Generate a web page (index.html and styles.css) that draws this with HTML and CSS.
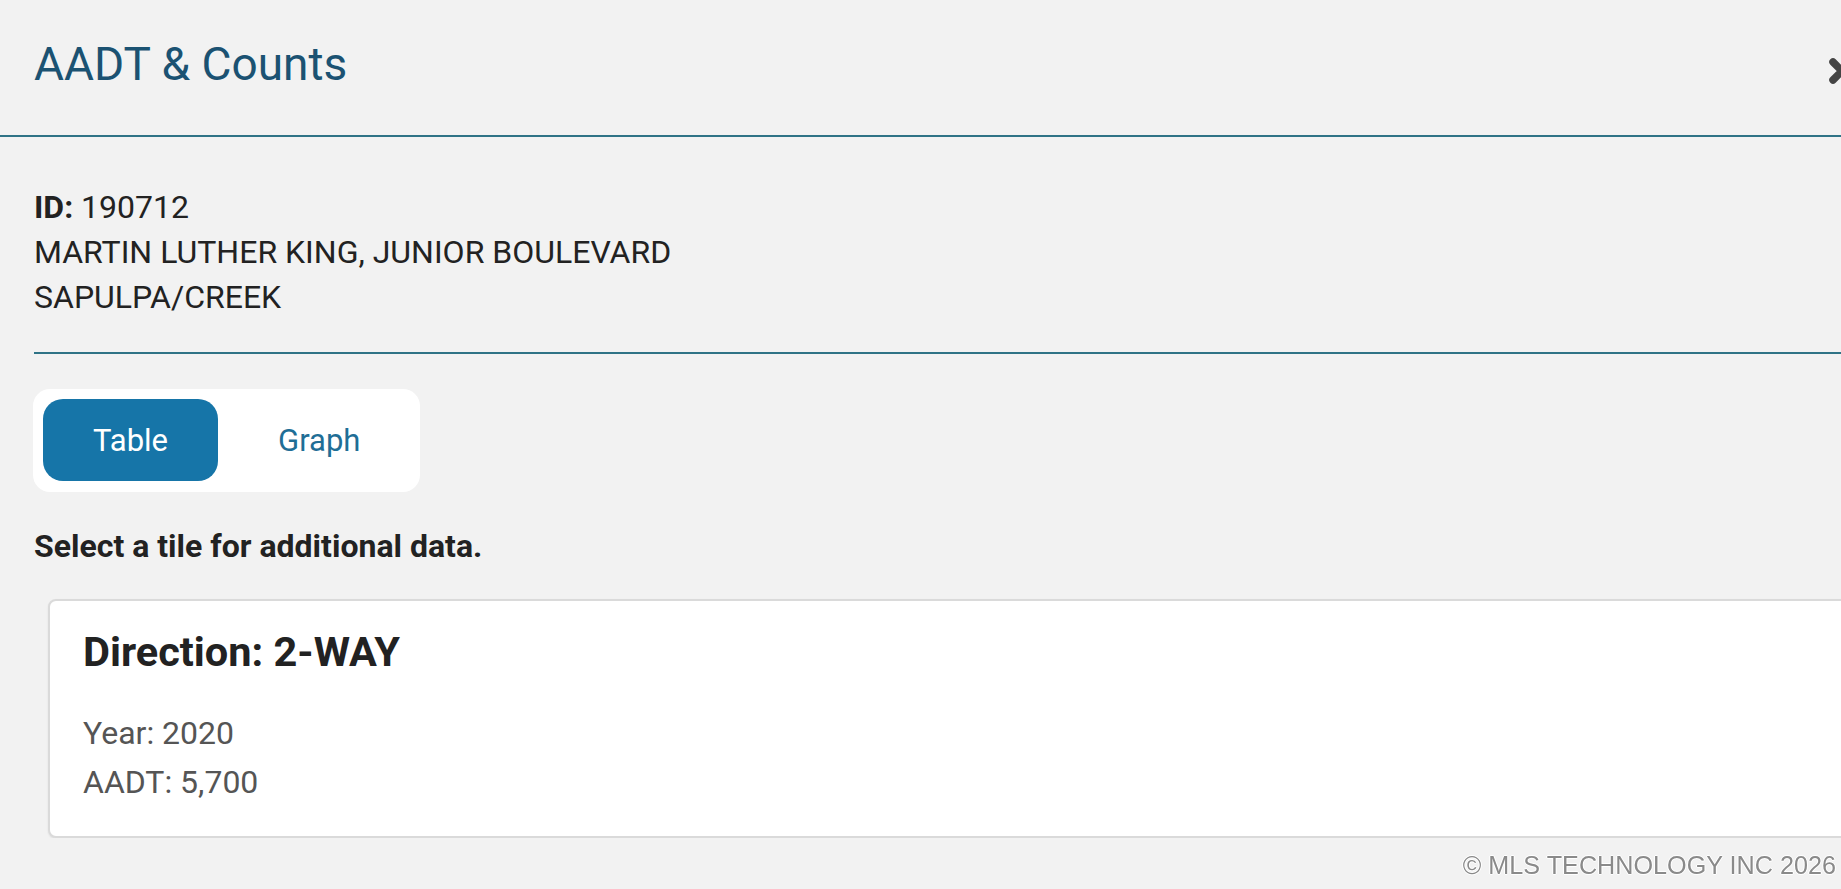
FILE: index.html
```html
<!DOCTYPE html>
<html lang="en">
<head>
<meta charset="utf-8">
<title>AADT &amp; Counts</title>
<link rel="stylesheet" href="styles.css">
</head>
<body>
<div class="modal">
  <header class="modal-header">
    <h1 class="modal-title">AADT &amp; Counts</h1>
    <button class="close-btn" aria-label="Close">
      <svg width="28" height="28" viewBox="0 0 28 28"><path d="M5 5 L23 23 M23 5 L5 23" stroke="#444" stroke-width="7.5" stroke-linecap="round" fill="none"/></svg>
    </button>
  </header>
  <section class="info">
    <div class="info-line"><b>ID:</b> 190712</div>
    <div class="info-line">MARTIN LUTHER KING, JUNIOR BOULEVARD</div>
    <div class="info-line">SAPULPA/CREEK</div>
  </section>
  <section class="content">
    <div class="toggle">
      <button class="toggle-btn active">Table</button>
      <button class="toggle-btn">Graph</button>
    </div>
    <p class="hint">Select a tile for additional data.</p>
    <div class="tile">
      <h2 class="tile-title">Direction: 2-WAY</h2>
      <div class="tile-line">Year: 2020</div>
      <div class="tile-line">AADT: 5,700</div>
    </div>
  </section>
</div>
<footer class="copyright">© MLS TECHNOLOGY INC 2026</footer>
</body>
</html>
```
FILE: styles.css
```css
html, body {
  margin: 0;
  padding: 0;
  overflow: hidden;
  background: #f2f2f2;
  font-family: Roboto, "Noto Sans", sans-serif;
  color: #222;
}

.modal {
  width: 1890px;
}

.modal-header {
  display: flex;
  justify-content: space-between;
  align-items: flex-start;
  padding: 37px 34px 43px 34px;
  border-bottom: 2px solid #2f7386;
}

.modal-title {
  margin: 0;
  font-size: 46px;
  font-weight: 400;
  line-height: 55px;
  color: #1b5272;
}

.close-btn {
  margin-top: 20px;
  padding: 0;
  border: 0;
  background: none;
  width: 28px;
  height: 28px;
  display: block;
}
.close-btn svg { display: block; }

.info {
  margin: 0 34px;
  padding: 48px 0 32px;
  border-bottom: 2px solid #2f7386;
}

.info-line {
  font-size: 32px;
  line-height: 45px;
}
.info-line b { font-weight: 700; }

.content {
  padding: 35px 34px 0 33px;
}

.toggle {
  display: inline-flex;
  gap: 10px;
  padding: 10px 10px 11px;
  background: #fff;
  border-radius: 17px;
}

.toggle-btn {
  height: 82px;
  padding: 0 50px;
  border: 0;
  border-radius: 20px;
  background: transparent;
  font-family: Roboto, sans-serif;
  font-size: 31px;
  color: #1f6e96;
}
.toggle-btn.active {
  background: #1675a8;
  color: #fff;
}

.hint {
  margin: 32px 0 0 1px;
  font-size: 32px;
  font-weight: 700;
  line-height: 45px;
  color: #222;
}

.tile {
  margin: 30px 0 0 15px;
  padding: 26px 33px 29px;
  background: #fff;
  border: 2px solid #dadada;
  border-radius: 8px;
  box-shadow: 0 1px 2px rgba(0,0,0,0.08);
}

.tile-title {
  margin: 0 0 32px;
  font-size: 41.5px;
  font-weight: 700;
  line-height: 50px;
  color: #222;
}

.tile-line {
  font-size: 32px;
  line-height: 49px;
  color: #555;
}

.copyright {
  position: fixed;
  right: 5px;
  bottom: 9px;
  font-family: "Liberation Sans", Arial, sans-serif;
  font-size: 25.2px;
  color: #8a8a8a;
  text-shadow: -1px 0 #fff, 1px 0 #fff, 0 -1px #fff, 0 1px #fff;
}
```
